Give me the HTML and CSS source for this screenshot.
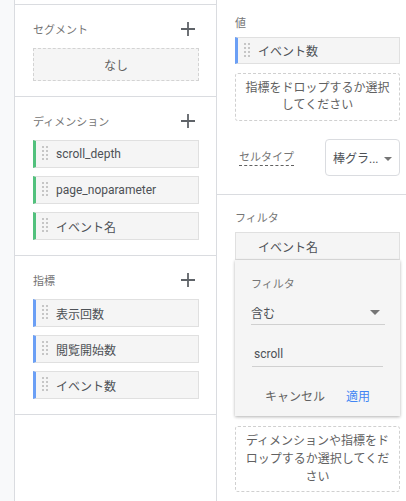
FILE: index.html
```html
<!DOCTYPE html>
<html lang="ja">
<head>
<meta charset="utf-8">
<link rel="stylesheet" href="styles.css">
</head>
<body>
<div class="rail"></div>
<div class="left">
  <div class="topcap"></div>
  <div class="section">
    <div class="sec-head"><span>セグメント</span><svg class="plus" width="14" height="14" viewBox="0 0 14 14"><path d="M7 0v14M0 7h14" stroke="#5f6368" stroke-width="1.8"/></svg></div>
    <div class="dropzone-small">なし</div>
  </div>
  <div class="section">
    <div class="sec-head"><span>ディメンション</span><svg class="plus" width="14" height="14" viewBox="0 0 14 14"><path d="M7 0v14M0 7h14" stroke="#5f6368" stroke-width="1.8"/></svg></div>
    <div class="chips">
      <div class="chip dim"><span class="handle"></span><span>scroll_depth</span></div>
      <div class="chip dim"><span class="handle"></span><span>page_noparameter</span></div>
      <div class="chip dim"><span class="handle"></span><span>イベント名</span></div>
    </div>
  </div>
  <div class="section">
    <div class="sec-head"><span>指標</span><svg class="plus" width="14" height="14" viewBox="0 0 14 14"><path d="M7 0v14M0 7h14" stroke="#5f6368" stroke-width="1.8"/></svg></div>
    <div class="chips">
      <div class="chip met"><span class="handle"></span><span>表示回数</span></div>
      <div class="chip met"><span class="handle"></span><span>閲覧開始数</span></div>
      <div class="chip met"><span class="handle"></span><span>イベント数</span></div>
    </div>
  </div>
</div>
<div class="right">
  <div class="rsec rsec-top">
    <div class="rlabel">値</div>
    <div class="chip met value-chip"><span class="handle"></span><span>イベント数</span></div>
    <div class="dropzone">指標をドロップするか選択してください</div>
    <div class="cell-row">
      <span class="cell-label">セルタイプ</span>
      <div class="cell-select"><span>棒グラ...</span><span class="tri"></span></div>
    </div>
  </div>
  <div class="rsec rsec-filter">
    <div class="rlabel">フィルタ</div>
    <div class="chip plain">イベント名</div>
    <div class="popup">
      <div class="popup-label">フィルタ</div>
      <div class="popup-select"><span>含む</span><span class="tri big"></span></div>
      <div class="popup-input">scroll</div>
      <div class="popup-actions"><span class="btn">キャンセル</span><span class="btn primary">適用</span></div>
    </div>
    <div class="dropzone dropzone-3">ディメンションや指標をドロップするか選択してください</div>
  </div>
</div>
</body>
</html>
```
FILE: styles.css
```css
html, body {
  margin: 0;
  padding: 0;
}
body {
  width: 406px;
  height: 501px;
  overflow: hidden;
  display: flex;
  background: #fff;
  font-family: Roboto, "Noto Sans CJK JP", sans-serif;
  color: #4d5156;
}
.rail {
  width: 14px;
  flex: none;
  background: #f8f9fa;
  border-right: 1px solid #dadce0;
}
.left {
  width: 201px;
  flex: none;
  border-right: 1px solid #dadce0;
}
.topcap {
  height: 4px;
  border-bottom: 1px solid #dadce0;
}
.section {
  padding: 16px 17px 15px 18px;
  border-bottom: 1px solid #dadce0;
}
.sec-head {
  display: flex;
  justify-content: space-between;
  align-items: center;
  height: 16px;
  margin-bottom: 11px;
  font-size: 11px;
  color: #757575;
}
.plus {
  margin-right: 4px;
}
.dropzone-small {
  height: 33px;
  box-sizing: border-box;
  border: 1px dashed #d3d3d3;
  background: #f5f5f5;
  display: flex;
  align-items: center;
  justify-content: center;
  font-size: 12px;
  color: #616161;
}
.chips {
  display: flex;
  flex-direction: column;
  gap: 8px;
}
.chip {
  height: 28px;
  box-sizing: border-box;
  background: #f5f5f5;
  border: 1px solid #e0e0e0;
  display: flex;
  align-items: center;
  font-size: 12px;
  color: #4d5156;
}
.chip.dim {
  border-left: 3px solid #52c17d;
}
.chip.met {
  border-left: 3px solid #6b9ff5;
}
.handle {
  width: 6px;
  height: 16px;
  margin-left: 6px;
  margin-right: 8px;
  flex: none;
  background-image: radial-gradient(circle at 1px 1px, #c6c6c6 1px, transparent 1.05px);
  background-size: 4px 4px;
}
.right {
  flex: 1;
  min-width: 0;
}
.rsec {
  padding: 0 6px 0 18px;
}
.rsec-top {
  padding-top: 16px;
  padding-bottom: 18px;
  border-bottom: 1px solid #dadce0;
}
.rlabel {
  height: 16px;
  line-height: 16px;
  font-size: 11px;
  color: #757575;
}
.rsec-top .rlabel {
  margin-bottom: 5px;
}
.value-chip {
  height: 27px;
  margin-bottom: 9px;
}
.dropzone {
  box-sizing: border-box;
  border: 1px dashed #d0d0d0;
  border-radius: 3px;
  padding: 6px 8px;
  text-align: center;
  font-size: 12px;
  line-height: 17px;
  color: #616161;
}
.cell-row {
  margin-top: 18px;
  height: 37px;
  display: flex;
  align-items: center;
  justify-content: space-between;
}
.cell-label {
  margin-left: 4px;
  margin-top: 1px;
  font-size: 11px;
  color: #757575;
  border-bottom: 1px dashed #616161;
  line-height: 15px;
}
.cell-select {
  width: 75px;
  height: 37px;
  box-sizing: border-box;
  border: 1px solid #dadce0;
  border-radius: 4px;
  padding-left: 7px;
  display: flex;
  align-items: center;
  font-size: 12px;
  color: #4d5156;
}
.tri {
  width: 0;
  height: 0;
  border-left: 4px solid transparent;
  border-right: 4px solid transparent;
  border-top: 4px solid #757575;
  margin-left: 5px;
  margin-top: 2px;
}
.tri.big {
  border-left-width: 5px;
  border-right-width: 5px;
  border-top-width: 5px;
  margin-right: 5px;
  margin-top: 0;
}
.rsec-filter {
  padding-top: 16px;
}
.rsec-filter .rlabel {
  margin-bottom: 5px;
}
.chip.plain {
  padding-left: 22px;
}
.popup {
  background: #f5f5f5;
  box-shadow: 0 1px 3px rgba(0, 0, 0, 0.3);
  padding: 17px 15px 8px 16px;
  height: 156px;
  box-sizing: border-box;
}
.popup-label {
  height: 16px;
  line-height: 16px;
  font-size: 11px;
  color: #757575;
}
.popup-select {
  margin-top: 9px;
  height: 23px;
  box-sizing: border-box;
  border-bottom: 1px solid #d0d0d0;
  display: flex;
  align-items: center;
  justify-content: space-between;
  font-size: 12px;
  color: #4d5156;
  padding-bottom: 1px;
}
.popup-input {
  margin-top: 17px;
  margin-left: 1px;
  margin-right: 2px;
  height: 25px;
  box-sizing: border-box;
  border-bottom: 1px solid #d0d0d0;
  padding-left: 2px;
  display: flex;
  align-items: center;
  font-size: 12px;
  color: #4d5156;
}
.popup-actions {
  margin-top: 19px;
  display: flex;
  gap: 21px;
  padding-left: 14px;
  font-size: 12px;
  line-height: 22px;
}
.btn {
  color: #616161;
}
.btn.primary {
  color: #4285f4;
}
.dropzone-3 {
  margin-top: 10px;
  padding: 5px 8px;
  line-height: 18px;
}
```
